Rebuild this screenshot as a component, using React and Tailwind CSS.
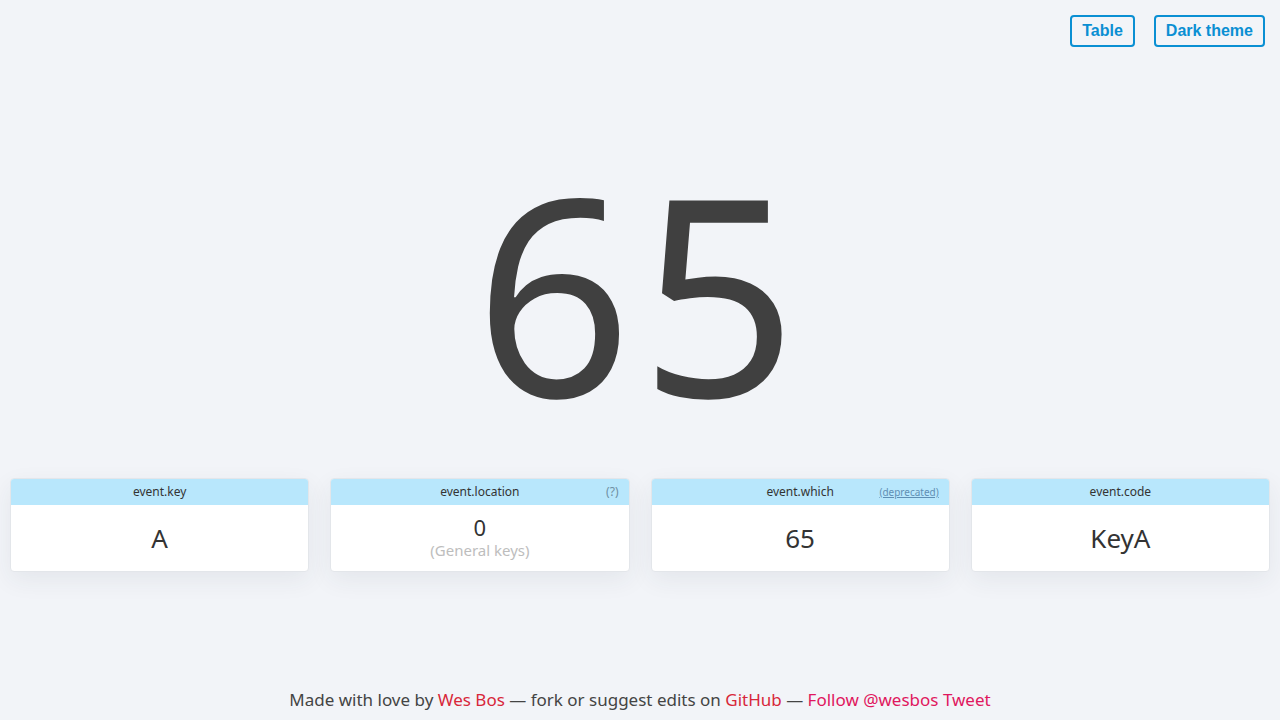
import React from 'react';

const font = { fontFamily: '"Noto Sans", "Open Sans", sans-serif' };

function Card({ title, extra, extraClass, children }) {
  return (
    <div className="flex-1 rounded-[4px] border border-[#e3e6ea] bg-white shadow-[0_8px_24px_rgba(40,50,70,0.07)] overflow-hidden">
      <div className="h-[26px] bg-[#b8e7fc] grid grid-cols-[1fr_auto_1fr] items-center text-[12px] text-[#333]">
        <span />
        <span>{title}</span>
        <span className={`justify-self-end pr-[10px] ${extraClass || ''}`}>{extra}</span>
      </div>
      <div className="h-[66px] flex flex-col items-center justify-center text-[#333]">{children}</div>
    </div>
  );
}

export default function App() {
  return (
    <div className="h-[720px] flex flex-col bg-[#f2f4f8] overflow-hidden" style={font}>
      <div className="flex justify-end gap-[19px] pt-[15px] pr-[15px]">
        {['Table', 'Dark theme'].map((t) => (
          <button
            key={t}
            className="h-[32px] px-[10px] rounded-[4px] border-2 border-[#0a8fd3] text-[#0a8fd3] text-[16px] font-bold bg-transparent"
            style={{ fontFamily: '"Liberation Sans", Arial, sans-serif' }}
          >
            {t}
          </button>
        ))}
      </div>

      <div className="mt-[106px] h-[275px] flex justify-center text-[275px] leading-[275px] font-normal text-[#404040] tracking-[8px]">
        65
      </div>

      <div className="mt-[50px] px-[10px] flex gap-[21px]">
        <Card title="event.key">
          <span className="text-[26px]">A</span>
        </Card>
        <Card title="event.location" extra="(?)" extraClass="text-[12px] text-[#6f8fa3]">
          <span className="text-[22px] leading-[22px]">0</span>
          <span className="mt-[2px] text-[15px] leading-[20px] text-[#bdbdbd]">(General keys)</span>
        </Card>
        <Card title="event.which" extra="(deprecated)" extraClass="text-[10px] text-[#5f8fb4] underline">
          <span className="text-[26px]">65</span>
        </Card>
        <Card title="event.code">
          <span className="text-[26px]">KeyA</span>
        </Card>
      </div>

      <div className="mt-auto pb-[8px] text-center text-[17px] text-[#444]">
        Made with love by <span className="text-[#d8273a]">Wes Bos</span> — fork or suggest edits on{' '}
        <span className="text-[#d8273a]">GitHub</span> — <span className="text-[#e0175e]">Follow @wesbos</span>{' '}
        <span className="text-[#e0175e]">Tweet</span>
      </div>
    </div>
  );
}
